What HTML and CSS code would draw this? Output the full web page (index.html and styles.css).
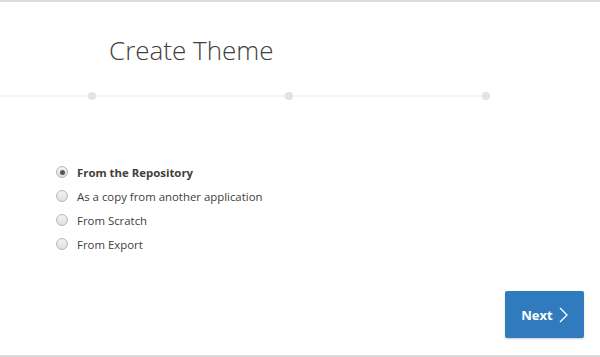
FILE: index.html
```html
<!DOCTYPE html>
<html lang="en">
<head>
    <meta charset="UTF-8">
    <title>Create Theme</title>
    <link rel="stylesheet" href="styles.css">
</head>
<body>
    <div class="dialog">
        <h1 class="title">Create Theme</h1>
        <div class="progress">
            <div class="track"></div>
            <span class="step s1"></span>
            <span class="step s2"></span>
            <span class="step s3"></span>
        </div>
        <div class="options">
            <label class="option selected"><span class="radio checked"></span>From the Repository</label>
            <label class="option"><span class="radio"></span>As a copy from another application</label>
            <label class="option"><span class="radio"></span>From Scratch</label>
            <label class="option"><span class="radio"></span>From Export</label>
        </div>
        <div class="footer">
            <button class="next-btn">Next
                <svg width="9" height="16" viewBox="0 0 9 16" fill="none" stroke="currentColor" stroke-width="1.4">
                    <polyline points="1,1 8,8 1,15"></polyline>
                </svg>
            </button>
        </div>
    </div>
</body>
</html>
```

FILE: styles.css
```css
body, html {
    margin: 0;
    padding: 0;
    height: 100%;
    overflow: hidden;
    background: #ffffff;
}
.dialog {
    height: 357px;
    box-sizing: border-box;
    border-top: 2px solid #dcdcdc;
    border-bottom: 2px solid #dcdcdc;
    font-family: "Open Sans", sans-serif;
    color: #404040;
    display: flex;
    flex-direction: column;
}
.title {
    margin: 32px 0 0 109px;
    font-size: 26px;
    font-weight: 300;
    color: #404040;
    line-height: 32px;
}
.progress {
    position: relative;
    height: 10px;
    margin-top: 25px;
}
.track {
    position: absolute;
    left: 0;
    width: 486px;
    top: 4px;
    height: 2px;
    background: #f5f5f5;
}
.step {
    position: absolute;
    top: 1px;
    width: 8px;
    height: 8px;
    border-radius: 50%;
    background: #e3e3e3;
}
.s1 { left: 88px; }
.s2 { left: 285px; }
.s3 { left: 482px; }
.options {
    display: flex;
    flex-direction: column;
    gap: 6px;
    margin: 62px 0 0 56px;
}
.option {
    display: flex;
    align-items: center;
    height: 18px;
    font-size: 11.4px;
    color: #404040;
}
.option.selected {
    font-weight: 700;
}
.radio {
    width: 10px;
    height: 10px;
    border-radius: 50%;
    border: 1px solid #b5b5b5;
    background: linear-gradient(#f4f4f4, #dedede);
    margin-right: 9px;
    position: relative;
}
.radio.checked::after {
    content: "";
    position: absolute;
    left: 2.5px;
    top: 2.5px;
    width: 5px;
    height: 5px;
    border-radius: 50%;
    background: #555555;
}
.footer {
    display: flex;
    justify-content: flex-end;
    padding-right: 16px;
    margin-top: auto;
    margin-bottom: 17px;
}
.next-btn {
    width: 79px;
    height: 47px;
    background: #2f7bbd;
    color: #ffffff;
    border: none;
    border-radius: 2px;
    font-family: "Open Sans", sans-serif;
    font-weight: 700;
    font-size: 13px;
    display: flex;
    align-items: center;
    justify-content: center;
    gap: 6px;
    box-shadow: 0 1px 2px rgba(0, 0, 0, 0.2);
}
```
